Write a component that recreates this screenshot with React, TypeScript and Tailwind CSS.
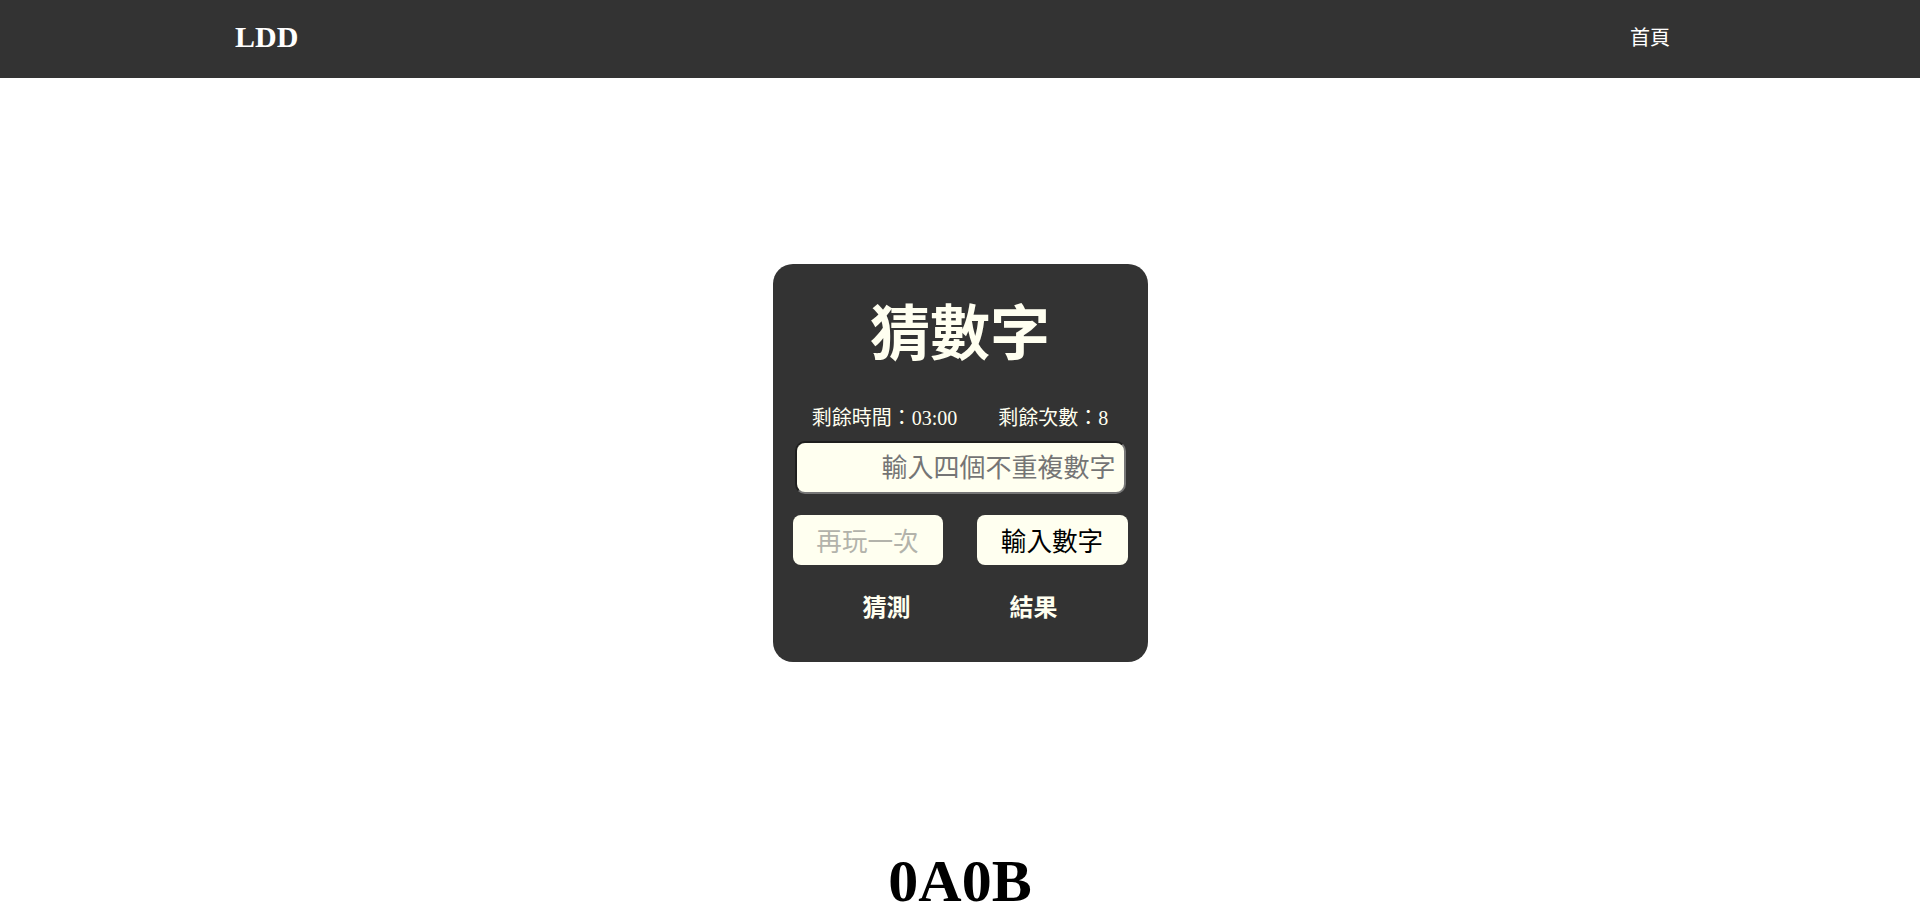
import { useState } from "react";

const serif = "font-['Liberation_Serif','Noto_Sans_CJK_TC',serif]";

export default function App() {
  const [guess, setGuess] = useState("");
  const [result] = useState("0A0B");

  return (
    <div className={`min-h-screen bg-white ${serif}`}>
      <nav className="h-[78px] bg-[#333] flex items-center justify-between pl-[235px] pr-[250px]">
        <a href="#" className="mb-[4px] text-[30px] font-bold text-white leading-none">
          LDD
        </a>
        <a href="#" className="mb-[2px] text-[20px] text-white leading-none">
          首頁
        </a>
      </nav>

      <section className="h-[769px] flex items-center justify-center">
        <div className="w-[375px] bg-[#333] rounded-[20px] px-[20px] pt-[41px] pb-[42px] flex flex-col">
          <h2 className="text-[60px] font-bold leading-none text-center text-[#fffff0]">
            猜數字
          </h2>

          <div className="mt-[43px] flex justify-center gap-[41px] text-[20px] leading-none text-[#fffff0]">
            <span>剩餘時間：03:00</span>
            <span>剩餘次數：8</span>
          </div>

          <input
            value={guess}
            onChange={(e) => setGuess(e.target.value)}
            placeholder="輸入四個不重複數字"
            className="mt-[13px] mx-[2px] h-[53px] rounded-[10px] bg-[#fffff0] border-2 border-t-[#1e1e1e] border-l-[#1e1e1e] border-b-[#777] border-r-[#777] pl-[12px] pr-[8px] pt-[3px] text-right text-[26px] text-black placeholder:text-[#757575] outline-none"
          />

          <div className="mt-[21px] flex justify-between">
            <button
              type="button"
              disabled
              className="w-[150px] h-[50px] pt-[6px] rounded-[8px] bg-[#fffff0] text-[25.6px] leading-none text-[#b3b3ab]"
            >
              再玩一次
            </button>
            <button
              type="button"
              className="w-[151px] h-[50px] pt-[6px] rounded-[8px] bg-[#fffff0] text-[25.6px] leading-none text-black"
            >
              輸入數字
            </button>
          </div>

          <div className="mt-[31px] mx-auto w-[294px] grid grid-cols-2 text-center text-[24px] font-bold leading-none text-[#fffff0]">
            <span>猜測</span>
            <span>結果</span>
          </div>
        </div>
      </section>

      <h1 className="text-[60px] font-bold leading-[1.15] text-center text-black">{result}</h1>
    </div>
  );
}
